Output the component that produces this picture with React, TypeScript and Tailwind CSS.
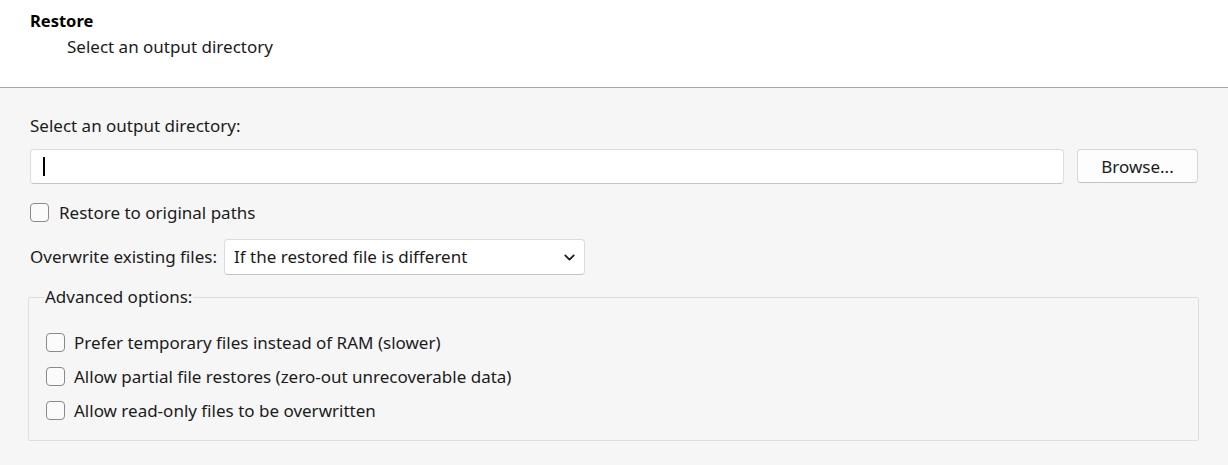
import { ChevronDown } from "lucide-react";

const advanced = [
  "Prefer temporary files instead of RAM (slower)",
  "Allow partial file restores (zero-out unrecoverable data)",
  "Allow read-only files to be overwritten",
];

function Box() {
  return <span className="w-[19px] h-[19px] shrink-0 rounded-[4px] border border-[#8a8a8a] bg-[#fbfbfb]" />;
}

export default function App() {
  return (
    <div className="w-[1228px] h-[465px] flex flex-col bg-[#f6f6f6] text-[#1b1b1b] text-[17px] font-['Noto_Sans','Open_Sans',sans-serif] overflow-hidden">
      <div className="h-[88px] shrink-0 bg-white border-b border-[#a8a8a8] pl-[30px] pt-[9px]">
        <div className="font-bold text-[16.5px] leading-[24px] text-black">Restore</div>
        <div className="pl-[37px] leading-[28px]">Select an output directory</div>
      </div>

      <div className="px-[30px] pt-[26px] flex flex-col">
        <div className="leading-[24px]">Select an output directory:</div>

        <div className="flex gap-[13px] mt-[11px]">
          <div className="flex-1 h-[35px] rounded-[4px] border border-[#dcdcdc] border-b-[#c4c4c4] bg-white flex items-center pl-[12px]">
            <span className="w-[2px] h-[19px] bg-black" />
          </div>
          <button className="w-[121px] h-[34px] rounded-[4px] border border-[#d6d6d6] border-b-[#c2c2c2] bg-[#fdfdfd] pt-[2px]">
            Browse...
          </button>
        </div>

        <label className="flex items-center gap-[10px] mt-[18px] h-[21px]">
          <Box />
          <span>Restore to original paths</span>
        </label>

        <div className="flex items-center mt-[16px] gap-[7px]">
          <span>Overwrite existing files:</span>
          <div className="w-[361px] h-[36px] rounded-[4px] border border-[#dcdcdc] border-b-[#c4c4c4] bg-white flex items-center justify-between pl-[9px] pr-[6px]">
            <span>If the restored file is different</span>
            <ChevronDown className="w-[17px] h-[17px] text-[#1b1b1b]" strokeWidth={2.5} />
          </div>
        </div>

        <fieldset className="mt-[11px] -ml-[2px] w-[1171px] h-[155px] border border-[#dedede] rounded-[2px] px-[17px] pt-[25px]">
          <legend className="-ml-[2px] px-[1px] leading-[22px]">Advanced options:</legend>
          <div className="flex flex-col gap-[15px]">
            {advanced.map((t) => (
              <label key={t} className="flex items-center gap-[9px] h-[19px]">
                <Box />
                <span>{t}</span>
              </label>
            ))}
          </div>
        </fieldset>
      </div>
    </div>
  );
}
